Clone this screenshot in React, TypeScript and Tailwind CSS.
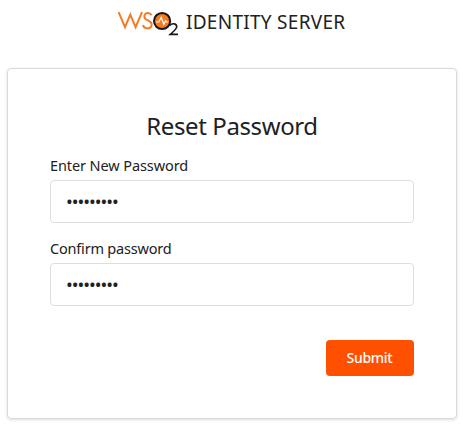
import React from "react";

function Logo() {
  return (
    <svg className="h-[26px] w-[62px] shrink-0" viewBox="0 0 62 26" fill="none" aria-label="WSO2">
      <g stroke="#f47b20" strokeWidth="2">
        <path d="M1.6 2.2 L8 17.2 L13.3 4.6 L18.6 17.2 L25 2.2" strokeLinejoin="miter" />
        <path d="M34.6 5.2 C33.4 3.5 31.8 2.9 30.3 3.1 C27.2 3.5 26.4 7.2 28.6 9 C30.4 10.4 34.5 11.2 34.7 14.2 C34.9 17.2 32 18.8 29.4 18.3 C27.5 17.9 26.4 16.6 26 15" />
      </g>
      <circle cx="45.1" cy="11" r="8.1" fill="#f47b20" stroke="#171717" strokeWidth="2" />
      <path d="M39 12 H41.8 L44.2 7.4 L46.8 14.2 L48.6 10.8 L49.6 12 H51.2" stroke="#fff" strokeWidth="1.2" />
      <path d="M52.4 15.8 C53.8 13 59.8 12.8 59.7 16.8 C59.6 19.4 56 21.8 53.2 24.4 H61" stroke="#171717" strokeWidth="1.6" />
    </svg>
  );
}

function Field({ id, label, tracking }: { id: string; label: string; tracking: string }) {
  return (
    <div>
      <label htmlFor={id} className={`block h-[25px] whitespace-nowrap text-[14.5px] leading-[20px] ${tracking}`}>
        {label}
      </label>
      <input
        id={id}
        type="password"
        readOnly
        defaultValue="wso2admin"
        className="block h-[43px] w-full rounded-[4px] border border-[#dededf] bg-white pb-[2px] pl-[15px] pr-4 text-[18px] tracking-[-1.03px] outline-none"
      />
    </div>
  );
}

export default function App() {
  return (
    <div className="h-[426px] w-[463px] overflow-hidden bg-white font-['Noto_Sans',sans-serif] text-[#212121]">
      <header className="flex h-[68px] items-start pl-[117px] pt-[10px]">
        <Logo />
        <span className="ml-[7px] whitespace-nowrap text-[19px] leading-[24px] tracking-[0.28px]">IDENTITY SERVER</span>
      </header>
      <main className="ml-[7px] h-[351px] w-[450px] rounded-[4px] border border-[#d9d9da] px-[42px] pt-[40px] shadow-[0_1px_3px_rgba(34,36,38,0.15)]">
        <h1 className="h-[46px] whitespace-nowrap text-center text-[24px] leading-[34px] tracking-[-0.4px]">Reset Password</h1>
        <form className="flex flex-col gap-[15px]">
          <Field id="password" label="Enter New Password" tracking="tracking-[-0.1px]" />
          <Field id="confirm" label="Confirm password" tracking="tracking-[-0.2px]" />
          <button
            type="button"
            className="mt-[19px] h-[36px] w-[88px] self-end rounded-[4px] bg-[#ff5000] pr-[1px] text-[14px] font-medium leading-[14px] tracking-[-0.3px] text-white"
          >
            Submit
          </button>
        </form>
      </main>
    </div>
  );
}
